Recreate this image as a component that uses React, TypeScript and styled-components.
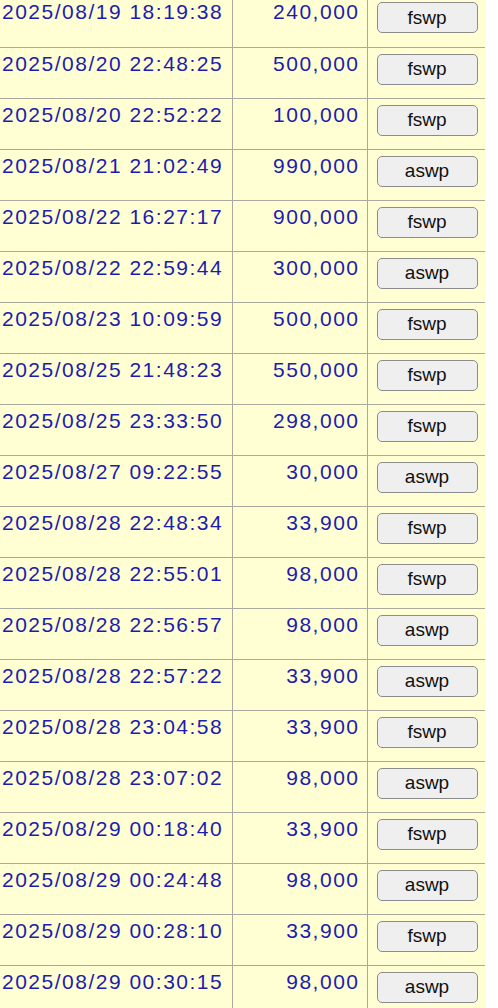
import React from "react";
import styled, { createGlobalStyle } from "styled-components";

const Global = createGlobalStyle`
  html, body {
    margin: 0;
    padding: 0;
    background: #ffffff;
    overflow: hidden;
  }
`;

const Table = styled.table`
  width: 485px;
  margin-top: -4px;
  border-collapse: collapse;
  table-layout: fixed;
  background: #ffffd3;
  font-family: "Liberation Sans", Arial, sans-serif;
`;

const Row = styled.tr`
  height: 51px;
`;

const Cell = styled.td<{ $align?: "left" | "right"; $first?: boolean }>`
  vertical-align: top;
  padding: 4px ${({ $align }) => ($align === "right" ? "7px" : "0")} 0
    ${({ $first }) => ($first ? "2px" : "0")};
  text-align: ${({ $align }) => $align ?? "left"};
  border-bottom: 1px solid #a9a9a0;
  border-left: ${({ $first }) => ($first ? "none" : "1px solid #a9a9a0")};
  color: #1c1cb0;
  font-size: 21px;
  line-height: 24px;
  letter-spacing: 1.5px;
  white-space: nowrap;
  overflow: hidden;
`;

const BtnCell = styled.td`
  vertical-align: top;
  padding: 6px 0 0 9px;
  border-bottom: 1px solid #a9a9a0;
  border-left: 1px solid #a9a9a0;
`;

const SwapButton = styled.button`
  width: 101px;
  height: 31px;
  padding: 0;
  border: 1px solid #8c8c8c;
  border-radius: 5px;
  background: #efefef;
  color: #111;
  font-family: "Liberation Sans", Arial, sans-serif;
  font-size: 19px;
  line-height: 20px;
  cursor: pointer;
`;

const rows: [string, string, string][] = [
  ["2025/08/19 18:19:38", "240,000", "fswp"],
  ["2025/08/20 22:48:25", "500,000", "fswp"],
  ["2025/08/20 22:52:22", "100,000", "fswp"],
  ["2025/08/21 21:02:49", "990,000", "aswp"],
  ["2025/08/22 16:27:17", "900,000", "fswp"],
  ["2025/08/22 22:59:44", "300,000", "aswp"],
  ["2025/08/23 10:09:59", "500,000", "fswp"],
  ["2025/08/25 21:48:23", "550,000", "fswp"],
  ["2025/08/25 23:33:50", "298,000", "fswp"],
  ["2025/08/27 09:22:55", "30,000", "aswp"],
  ["2025/08/28 22:48:34", "33,900", "fswp"],
  ["2025/08/28 22:55:01", "98,000", "fswp"],
  ["2025/08/28 22:56:57", "98,000", "aswp"],
  ["2025/08/28 22:57:22", "33,900", "aswp"],
  ["2025/08/28 23:04:58", "33,900", "fswp"],
  ["2025/08/28 23:07:02", "98,000", "aswp"],
  ["2025/08/29 00:18:40", "33,900", "fswp"],
  ["2025/08/29 00:24:48", "98,000", "aswp"],
  ["2025/08/29 00:28:10", "33,900", "fswp"],
  ["2025/08/29 00:30:15", "98,000", "aswp"],
];

export default function App() {
  return (
    <>
      <Global />
      <Table>
        <colgroup>
          <col style={{ width: 232 }} />
          <col style={{ width: 135 }} />
          <col style={{ width: 118 }} />
        </colgroup>
        <tbody>
          {rows.map(([time, amount, kind], i) => (
            <Row key={i}>
              <Cell $first>{time}</Cell>
              <Cell $align="right">{amount}</Cell>
              <BtnCell>
                <SwapButton>{kind}</SwapButton>
              </BtnCell>
            </Row>
          ))}
        </tbody>
      </Table>
    </>
  );
}
